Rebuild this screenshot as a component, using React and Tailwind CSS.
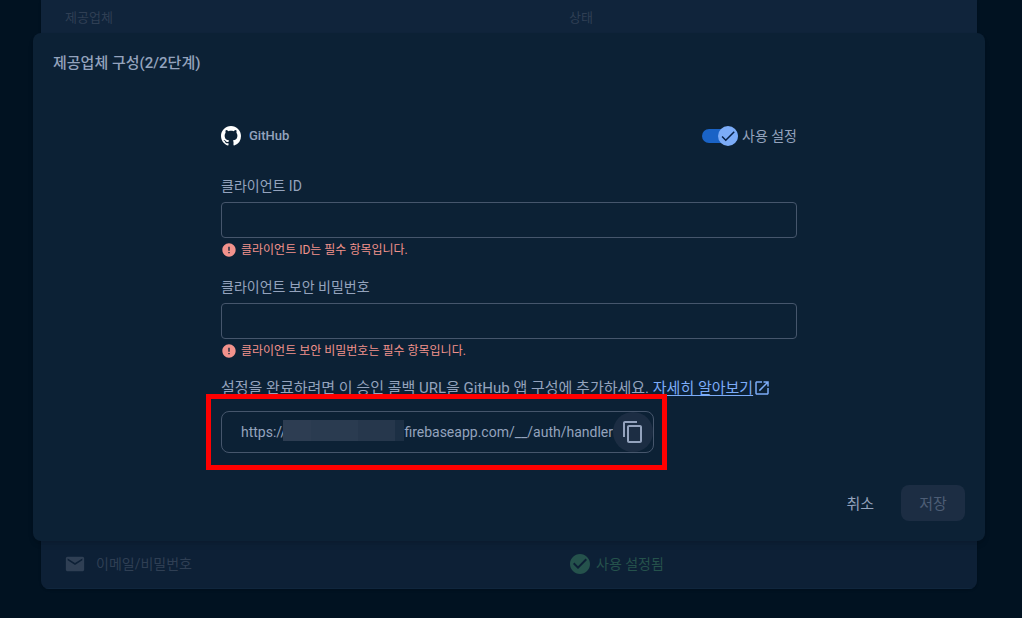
const ERROR_ICON = "M12 2C6.48 2 2 6.48 2 12s4.48 10 10 10 10-4.48 10-10S17.52 2 12 2zm1 15h-2v-2h2v2zm0-4h-2V7h2v6z";
const CHECK_ICON = "M9 16.17L4.83 12l-1.42 1.41L9 19 21 7l-1.41-1.41z";
const CHECK_CIRCLE_ICON = "M12 2C6.48 2 2 6.48 2 12s4.48 10 10 10 10-4.48 10-10S17.52 2 12 2zm-2 15l-5-5 1.41-1.41L10 14.17l7.59-7.59L19 8l-9 9z";
const MAIL_ICON = "M20 4H4c-1.1 0-1.99.9-1.99 2L2 18c0 1.1.9 2 2 2h16c1.1 0 2-.9 2-2V6c0-1.1-.9-2-2-2zm0 4l-8 5-8-5V6l8 5 8-5v2z";
const OPEN_ICON = "M19 19H5V5h7V3H5c-1.11 0-2 .9-2 2v14c0 1.1.89 2 2 2h14c1.1 0 2-.9 2-2v-7h-2v7zM14 3v2h3.59l-9.83 9.83 1.41 1.41L19 6.41V10h2V3h-7z";
const COPY_ICON = "M16 1H4c-1.1 0-2 .9-2 2v14h2V3h12V1zm3 4H8c-1.1 0-2 .9-2 2v14c0 1.1.9 2 2 2h11c1.1 0 2-.9 2-2V7c0-1.1-.9-2-2-2zm0 16H8V7h11v14z";
const GITHUB_ICON = "M8 0C3.58 0 0 3.58 0 8c0 3.54 2.29 6.53 5.47 7.59.4.07.55-.17.55-.38 0-.19-.01-.82-.01-1.49-2.01.37-2.53-.49-2.69-.94-.09-.23-.48-.94-.82-1.13-.28-.15-.68-.52-.01-.53.63-.01 1.08.58 1.23.82.72 1.21 1.87.87 2.33.66.07-.52.28-.87.51-1.07-1.78-.2-3.64-.89-3.64-3.95 0-.87.31-1.59.82-2.15-.08-.2-.36-1.02.08-2.12 0 0 .67-.21 2.2.82.64-.18 1.32-.27 2-.27s1.36.09 2 .27c1.53-1.04 2.2-.82 2.2-.82.44 1.1.16 1.92.08 2.12.51.56.82 1.27.82 2.15 0 3.07-1.87 3.75-3.65 3.95.29.25.54.73.54 1.48 0 1.07-.01 1.93-.01 2.2 0 .21.15.46.55.38A8.01 8.01 0 0 0 16 8c0-4.42-3.58-8-8-8z";

function Icon({ path, className, viewBox = "0 0 24 24" }) {
  return (
    <svg viewBox={viewBox} className={className} fill="currentColor" aria-hidden="true">
      <path d={path} />
    </svg>
  );
}

function Field({ id, label, type, error }) {
  return (
    <div>
      <label htmlFor={id} className="block text-sm leading-5">{label}</label>
      <input
        id={id}
        type={type}
        aria-invalid="true"
        aria-describedby={`${id}-error`}
        className="mt-1.5 block h-9 w-full rounded border border-[#46566c] bg-transparent px-3 text-sm outline-none"
      />
      <p id={`${id}-error`} className="mt-1 flex h-4 items-center gap-1 text-xs leading-4 text-[#f2928c]">
        <Icon path={ERROR_ICON} className="size-4 shrink-0" />
        {error}
      </p>
    </div>
  );
}

function ProviderTable() {
  return (
    <table className="mx-auto h-[589px] w-full max-w-[936px] table-fixed border-separate border-spacing-0 overflow-hidden rounded-b-lg bg-[#0d2036] text-left text-[#2f3f54] shadow">
      <thead>
        <tr className="h-9 bg-[#10243b] text-[13px]">
          <th className="w-[504px] pl-6 font-normal">제공업체</th>
          <th className="pl-6 font-normal">상태</th>
        </tr>
      </thead>
      <tbody>
        <tr className="align-bottom text-sm">
          <td className="border-b border-[#10263d] pb-3 pl-[23px]">
            <span className="flex h-6 items-center gap-2.5">
              <Icon path={MAIL_ICON} className="size-5.5 shrink-0" />
              이메일/비밀번호
            </span>
          </td>
          <td className="border-b border-[#10263d] pb-3 pl-[23px] text-[#25524c]">
            <span className="flex h-6 items-center gap-1">
              <Icon path={CHECK_CIRCLE_ICON} className="size-6 shrink-0" />
              사용 설정됨
            </span>
          </td>
        </tr>
      </tbody>
    </table>
  );
}

function ProviderDialog() {
  return (
    <form
      role="dialog"
      aria-labelledby="dialog-title"
      onSubmit={(event) => event.preventDefault()}
      className="mx-auto w-full max-w-[952px] rounded-lg bg-[#0c2135] px-5 pt-5 pb-5 shadow-md"
    >
      <h1 id="dialog-title" className="text-[15px] leading-5 font-medium">제공업체 구성(2/2단계)</h1>

      <div className="mx-auto mt-[53px] max-w-xl">
        <div className="flex items-center justify-between">
          <div className="flex items-center gap-2 text-[13px] font-medium">
            <Icon path={GITHUB_ICON} viewBox="0 0 16 16" className="size-5 text-white" />
            GitHub
          </div>
          <label className="flex items-center gap-1 text-sm">
            <input type="checkbox" role="switch" defaultChecked className="peer sr-only" />
            <span className="flex h-3.5 w-9 items-center justify-end rounded-full bg-[#1a63c6]">
              <span className="flex size-5 shrink-0 items-center justify-center rounded-full bg-[#7cacf8] text-[#062047]">
                <Icon path={CHECK_ICON} className="size-[18px]" />
              </span>
            </span>
            사용 설정
          </label>
        </div>

        <div className="mt-7.5 space-y-[19px]">
          <Field id="client-id" label="클라이언트 ID" type="text" error="클라이언트 ID는 필수 항목입니다." />
          <Field id="client-secret" label="클라이언트 보안 비밀번호" type="password" error="클라이언트 보안 비밀번호는 필수 항목입니다." />
        </div>

        <p className="mt-[19px] flex items-center text-[15px] leading-5">
          <span>
            설정을 완료하려면 이 승인 콜백 URL을 GitHub 앱 구성에 추가하세요.{" "}
            <a href="#learn-more" className="text-[#7cacf8] underline underline-offset-2">자세히 알아보기</a>
          </span>
          <Icon path={OPEN_ICON} className="size-[18px] shrink-0 text-[#7cacf8]" />
        </p>

        <div className="relative mt-[13px] flex h-[42px] w-fit items-center rounded-lg border border-[#46566c] pl-[19px] text-sm">
          <span>https://</span>
          <span className="z-10 -ml-[3px] -mt-1 flex h-[21px] w-[121px]">
            <span className="flex-3 bg-[#2d3d52]" />
            <span className="flex-5 bg-[#2a3b50]" />
            <span className="flex-4 bg-[#26374c]" />
            <span className="flex-1 bg-[#1c2f44]" />
          </span>
          <span>firebaseapp.com/__/auth/handler</span>
          <button type="button" aria-label="URL 복사" className="flex size-10 items-center justify-center rounded-full bg-[#1c2d43]">
            <Icon path={COPY_ICON} className="size-6" />
          </button>
          <span className="pointer-events-none absolute -top-[18px] -right-3.5 -bottom-[18px] -left-4 border-5 border-[#ff0000]" />
        </div>
      </div>

      <div className="mt-8 flex justify-end gap-2 text-[15px]">
        <button type="button" className="h-9 px-[19px] pt-0.5">취소</button>
        <button type="submit" disabled className="h-9 w-16 rounded-lg bg-[#1c2d43] pt-0.5 text-[#4d5d75]">저장</button>
      </div>
    </form>
  );
}

export default function App() {
  return (
    <main className="relative min-h-screen bg-[#011221] pr-1 font-['Roboto','Noto_Sans_CJK_KR',sans-serif] text-[#94a3bd]">
      <ProviderTable />
      <div className="absolute inset-x-0 top-[33px] pr-1">
        <ProviderDialog />
      </div>
    </main>
  );
}
